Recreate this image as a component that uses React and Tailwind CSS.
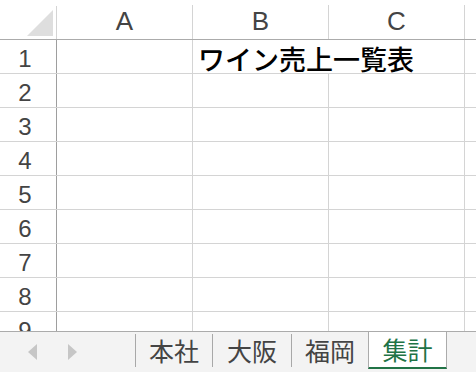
import React from 'react';

const cols = ['A', 'B', 'C'];
const rows = [1, 2, 3, 4, 5, 6, 7, 8, 9];
const tabs = ['本社', '大阪', '福岡'];

const latin = { fontFamily: '"Liberation Sans", Arial, sans-serif' };
const jp = { fontFamily: '"Noto Sans CJK JP", "Noto Sans", sans-serif' };

function Row({ n }) {
  return (
    <div className="flex h-[34px] shrink-0 border-b border-[#d4d4d4]">
      <div
        className="flex w-[57px] shrink-0 items-center justify-center border-r border-[#9e9e9e] pt-[4px] pr-[6px] text-[24px] text-[#444]"
        style={latin}
      >
        {n}
      </div>
      <div className="w-[136px] shrink-0 border-r border-[#d4d4d4]"></div>
      {/* text overflowing into C hides the grid line between B and C */}
      <div className={`relative w-[136px] shrink-0 border-r ${n === 1 ? 'border-white' : 'border-[#d4d4d4]'}`}>
        {n === 1 && (
          <span
            className="absolute left-[5px] top-[2px] z-10 whitespace-nowrap text-[27px] font-medium leading-[33px] text-black"
            style={jp}
          >
            ワイン売上一覧表
          </span>
        )}
      </div>
      <div className="w-[136px] shrink-0 border-r border-[#d4d4d4]"></div>
      <div className="flex-1"></div>
    </div>
  );
}

export default function App() {
  return (
    <div className="flex h-[372px] w-[476px] flex-col overflow-hidden bg-white">
      <div className="h-[331px] shrink-0 overflow-hidden">
        <div className="flex h-[40px] border-b border-[#ababab]">
          <div className="relative flex w-[57px] shrink-0 flex-col justify-end">
            <svg className="absolute left-[27px] top-[10px]" width="26" height="26" viewBox="0 0 26 26">
              <polygon points="0,26 26,26 26,0" fill="#dedede" />
            </svg>
            <div className="h-[33px] border-r border-[#d4d4d4]"></div>
          </div>
          {cols.map(c => (
            <div key={c} className="flex w-[136px] shrink-0 flex-col justify-end">
              <div
                className="flex h-[34px] items-center justify-center border-r border-[#d4d4d4] pb-[2px] text-[26px] text-[#444]"
                style={latin}
              >
                {c}
              </div>
            </div>
          ))}
          <div className="flex-1"></div>
        </div>
        {rows.map(n => (
          <Row key={n} n={n} />
        ))}
      </div>
      <div className="flex h-[41px] shrink-0 border-t border-[#ababab] bg-[#f3f3f3]">
        <div className="flex w-[135px] shrink-0 items-center">
          <svg className="ml-[28px]" width="9" height="16" viewBox="0 0 9 16">
            <polygon points="9,0 9,16 0,8" fill="#c6c6c6" />
          </svg>
          <svg className="ml-[31px]" width="9" height="16" viewBox="0 0 9 16">
            <polygon points="0,0 0,16 9,8" fill="#c6c6c6" />
          </svg>
        </div>
        {tabs.map((t, i) => (
          <div key={t} className={`flex h-[36px] shrink-0 items-center ${i === 1 ? 'w-[79px]' : 'w-[77px]'}`}>
            <div className="h-[33px] w-px bg-[#a8a8a8]"></div>
            <span className="flex-1 text-center text-[25px] leading-none text-[#444]" style={jp}>
              {t}
            </span>
          </div>
        ))}
        <div className="flex h-[37px] w-[79px] shrink-0 items-center justify-center border-x border-b-2 border-x-[#ababab] border-b-[#217346] bg-white">
          <span className="text-[25px] leading-none text-[#217346]" style={jp}>
            集計
          </span>
        </div>
      </div>
    </div>
  );
}
